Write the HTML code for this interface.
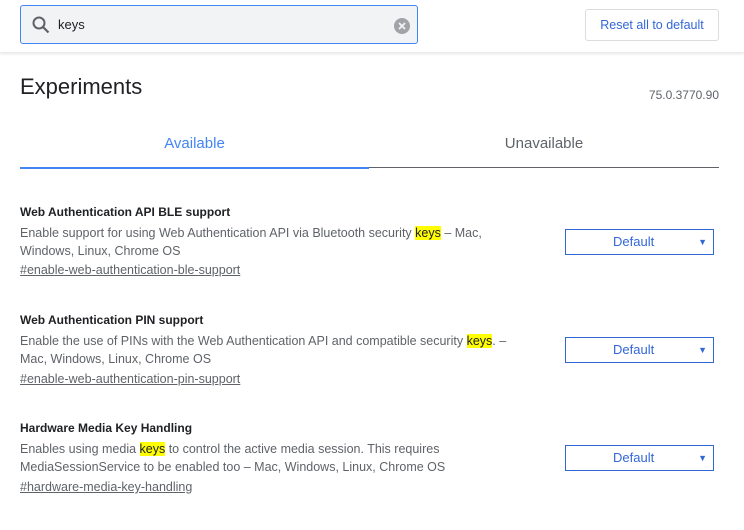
<!DOCTYPE html>
<html><head><style>
body{margin:0;width:744px;height:530px;overflow:hidden;background:#fff;font-family:"Liberation Sans",sans-serif;position:relative}
.hdr{position:absolute;left:0;top:0;width:744px;height:52px;background:#fff;box-shadow:0 2px 3px rgba(0,0,0,.1)}
.search{position:absolute;left:20px;top:5px;width:398px;height:39px;background:#f1f3f4;border:1px solid #4285f4;border-radius:3px;box-sizing:border-box}
.search .t{position:absolute;left:37px;top:11px;font-size:13px;color:#202124}
.reset{position:absolute;left:585px;top:9px;width:134px;height:32px;border:1px solid #dadce0;border-radius:3px;box-sizing:border-box;color:#3367d6;font-size:12.5px;text-align:center;line-height:30px}
.a{position:absolute;white-space:nowrap}
.desc{font-size:12.5px;color:#5f6368;line-height:18px}
.ttl{font-size:12px;color:#202124;font-weight:bold}
.lnk{font-size:12.5px;color:#5f6368;text-decoration:underline}
mark{background:#ffff00;color:#202124}
.sel{position:absolute;left:565px;width:149px;height:26px;border:1px solid #3367d6;box-sizing:border-box;color:#3367d6;font-size:13px;line-height:24px}
.sel span{position:absolute;left:47px}
.sel i{position:absolute;right:6px;top:0;font-style:normal;font-size:9px}
</style></head><body>
<div class="hdr">
<div class="search">
<svg style="position:absolute;left:10px;top:9px" width="20" height="20" viewBox="0 0 20 20"><circle cx="8" cy="8" r="5.5" fill="none" stroke="#5f6368" stroke-width="2"/><path d="M12 12l5.5 5.5" stroke="#5f6368" stroke-width="2.2"/></svg>
<div class="t">keys</div>
<svg style="position:absolute;left:373px;top:12px" width="16" height="16" viewBox="0 0 16 16"><circle cx="8" cy="8" r="8" fill="#a0a3a7"/><path d="M5 5l6 6M11 5l-6 6" stroke="#f1f3f4" stroke-width="1.8"/></svg>
</div>
<div class="reset">Reset all to default</div>
</div>
<div class="a" style="left:20px;top:74px;font-size:22px;color:#202124">Experiments</div>
<div class="a" style="right:25px;top:88px;font-size:12px;color:#5f6368">75.0.3770.90</div>
<div class="a" style="left:20px;width:349px;top:135px;text-align:center;font-size:15px;color:#4285f4">Available</div>
<div class="a" style="left:369px;width:350px;top:135px;text-align:center;font-size:15px;color:#5f6368">Unavailable</div>
<div class="a" style="left:20px;top:167px;width:349px;height:2px;background:#4285f4"></div>
<div class="a" style="left:369px;top:167px;width:350px;height:1px;background:#5f6368"></div>

<div class="a ttl" style="left:20px;top:205px">Web Authentication API BLE support</div>
<div class="a desc" style="left:20px;top:224px">Enable support for using Web Authentication API via Bluetooth security <mark>keys</mark> – Mac,<br>Windows, Linux, Chrome OS</div>
<div class="a lnk" style="left:20px;top:263px">#enable-web-authentication-ble-support</div>
<div class="sel" style="top:229px"><span>Default</span><i>▼</i></div>

<div class="a ttl" style="left:20px;top:313px">Web Authentication PIN support</div>
<div class="a desc" style="left:20px;top:332px">Enable the use of PINs with the Web Authentication API and compatible security <mark>keys</mark>. –<br>Mac, Windows, Linux, Chrome OS</div>
<div class="a lnk" style="left:20px;top:372px">#enable-web-authentication-pin-support</div>
<div class="sel" style="top:337px"><span>Default</span><i>▼</i></div>

<div class="a ttl" style="left:20px;top:421px">Hardware Media Key Handling</div>
<div class="a desc" style="left:20px;top:440px">Enables using media <mark>keys</mark> to control the active media session. This requires<br>MediaSessionService to be enabled too – Mac, Windows, Linux, Chrome OS</div>
<div class="a lnk" style="left:20px;top:480px">#hardware-media-key-handling</div>
<div class="sel" style="top:445px"><span>Default</span><i>▼</i></div>
</body></html>
